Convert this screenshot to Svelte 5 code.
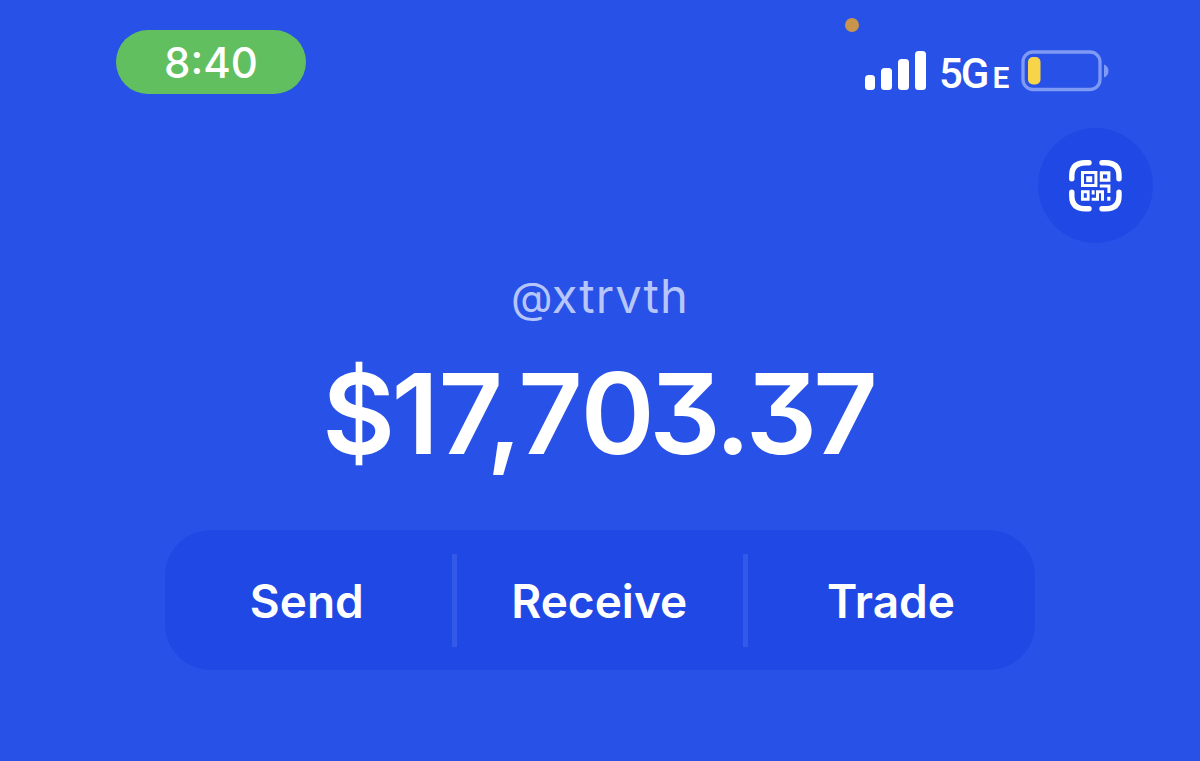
<script>
	const handle = 'xtrvth';
	const signal = [15, 22, 31, 39];
	const actions = ['Send', 'Receive', 'Trade'];

	// letter-spacing per character keeps the balance tight
	const balance = [
		{ char: '$', space: -3.5 },
		{ char: '1', space: -0.5 },
		{ char: '7', space: -16.5 },
		{ char: ',', space: -4 },
		{ char: '7', space: -2 },
		{ char: '0', space: -5.5 },
		{ char: '3', space: -5.5 },
		{ char: '.', space: -5 },
		{ char: '3', space: -4 },
		{ char: '7', space: 0 }
	];
</script>

<main>
	<header>
		<div class="time">8:40</div>
		<div class="status">
			<span class="mic"></span>
			<div class="signal">
				{#each signal as height}
					<span style="height: {height}px"></span>
				{/each}
			</div>
			<div class="network">5G<small>E</small></div>
			<svg class="battery" width="89" height="42" viewBox="0 0 89 42">
				<rect x="2" y="2" width="77" height="37.5" rx="10" fill="none" stroke="#7f9af4" stroke-width="3.3" />
				<rect x="7" y="7" width="12.5" height="27.5" rx="5" fill="#f8d548" />
				<path d="M83 14.5c6 2 6 11 0 13z" fill="#7f9af4" />
			</svg>
		</div>
	</header>

	<div class="toolbar">
		<button class="scan" aria-label="Scan">
			<svg width="53" height="52" viewBox="0 0 53 52">
				<g fill="none" stroke="#fff" stroke-width="5.4" stroke-linecap="round">
					<path d="M20 2.8H16.5Q2.8 2.8 2.8 15.5V18.8" />
					<path d="M33 2.8H36.5Q50 2.8 50 15.5V18.8" />
					<path d="M2.8 32.2V36Q2.8 48.8 16.5 48.8H20" />
					<path d="M50 32.2V36Q50 48.8 36.5 48.8H33" />
				</g>
				<g fill="#fff" fill-rule="evenodd">
					<path d="M12 11h16.4v16H12zM15 14v10h10.4V14z" />
					<path d="M17.2 16.2h6v6h-6z" />
					<path d="M30.8 11.2h10.6v10.5H30.8zM34 14.4v4.1h4.2v-4.1z" />
					<path d="M12 30.2h8.6v10.5H12zM14.8 33.2v4.5h3v-4.5z" />
					<path d="M30.8 24.4h10.6v8.7h-3v-5.7h-7.6z" />
					<path d="M38.2 36.8h3.2v3.9h-3.2z" />
					<path d="M22.7 30.2h2.9v4.2h-2.9zM27.6 30.2H35v10.5h-3v-7.5h-2v7.5h-7.3v-3h4.3v-7.5z" />
				</g>
			</svg>
		</button>
	</div>

	<section>
		<p class="handle"><span>@</span>{handle}</p>
		<h1>{#each balance as { char, space }}<span style="letter-spacing: {space}px">{char}</span>{/each}</h1>
	</section>

	<nav>
		{#each actions as action}
			<button>{action}</button>
		{/each}
	</nav>
</main>

<style>
	:global(body) {
		margin: 0;
		background: #2751e7;
	}
	main {
		width: 1200px;
		height: 761px;
		overflow: hidden;
		color: white;
		background: #2751e7;
		font-family: Inter, 'Liberation Sans', sans-serif;
	}
	button {
		padding: 0;
		border: none;
		color: inherit;
		font-family: inherit;
	}
	header {
		box-sizing: border-box;
		display: flex;
		justify-content: space-between;
		align-items: flex-start;
		height: 98px;
		padding: 30px 90px 0 116px;
	}
	.time {
		width: 190px;
		height: 64px;
		border-radius: 32px;
		background: #61bf60;
		font-size: 42px;
		font-weight: 450;
		line-height: 65px;
		text-align: center;
	}
	.status {
		position: relative;
		display: flex;
		align-items: flex-end;
		height: 42px;
		margin-top: 20px;
	}
	.mic {
		position: absolute;
		top: -32px;
		left: -19.5px;
		width: 14px;
		height: 14px;
		border-radius: 50%;
		background: #c9944b;
	}
	.signal {
		display: flex;
		align-items: flex-end;
		gap: 6.3px;
		margin-bottom: 2px;
	}
	.signal span {
		width: 10.5px;
		border-radius: 3.5px;
		background: white;
	}
	.network {
		width: 82px;
		height: 42px;
		padding-left: 13.5px;
		font-family: Roboto, sans-serif;
		font-size: 42px;
		font-weight: 500;
		line-height: 47px;
		letter-spacing: -2px;
		white-space: nowrap;
	}
	.network small {
		margin-left: 5px;
		font-size: 30px;
		font-weight: 600;
		line-height: 1;
	}
	.toolbar {
		box-sizing: border-box;
		display: flex;
		justify-content: flex-end;
		height: 145px;
		padding: 30px 47px 0 0;
	}
	.scan {
		display: flex;
		align-items: center;
		justify-content: center;
		width: 115px;
		height: 115px;
		border-radius: 50%;
		background: #2048e4;
	}
	section {
		height: 257px;
		text-align: center;
	}
	.handle {
		margin: 0;
		padding-top: 25px;
		color: #b6c6fa;
		font-size: 47px;
		font-weight: 400;
		line-height: 56px;
		letter-spacing: 1.1px;
	}
	.handle span {
		font-size: 43px;
		letter-spacing: -1px;
	}
	h1 {
		margin: 20px 0 0;
		font-size: 112px;
		font-weight: 600;
		line-height: 136px;
		font-feature-settings: 'cv09', 'calt' 0;
		white-space: nowrap;
	}
	nav {
		display: grid;
		grid-template-columns: 286.5px 291.5px 292px;
		align-items: center;
		width: 870px;
		height: 140px;
		margin: 30px auto 0;
		border-radius: 46px;
		background: #2048e4;
	}
	nav button {
		height: 93px;
		padding: 2px 3px 0 0;
		background: none;
		font-size: 46px;
		font-weight: 600;
	}
	nav button + button {
		padding-right: 1px;
		border-left: 5.5px solid #3259e8;
	}
</style>
